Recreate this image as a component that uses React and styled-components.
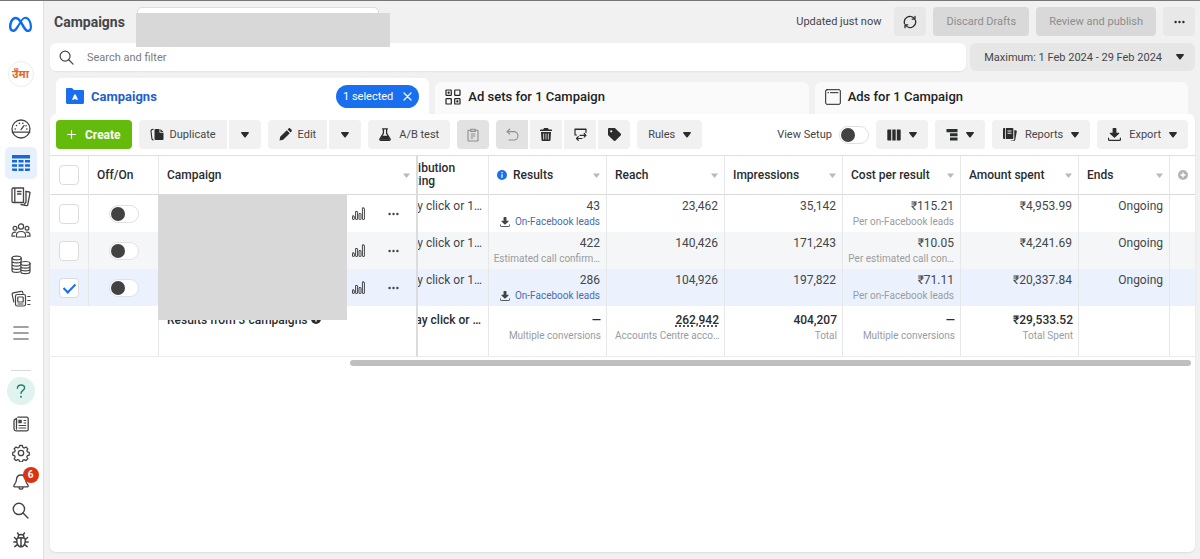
import React, { useState } from "react";
import styled, { createGlobalStyle } from "styled-components";
import { FaMeta } from "react-icons/fa6";

const GlobalStyle = createGlobalStyle`
  * {
    box-sizing: border-box;
  }
  body {
    margin: 0;
    background: #f1f1f1;
    color: #444648;
    font-family: Roboto, "Noto Sans", "Liberation Sans", sans-serif;
    font-size: 12px;
  }
  button, input {
    font: inherit;
    color: inherit;
  }
`;

const Page = styled.div`
  display: flex;
  min-height: 100vh;
  border-top: 1px solid #77757a;
`;

/* sidebar */

const Sidebar = styled.nav`
  display: flex;
  flex-direction: column;
  align-items: center;
  flex: none;
  width: 44px;
  padding: 12px 2px 5px 0;
  background: #fff;
  border-right: 1px solid #dedede;
`;

const Logo = styled.a`
  display: flex;
  margin-bottom: 25px;
`;

const Avatar = styled.a`
  display: flex;
  align-items: center;
  justify-content: center;
  width: 26px;
  height: 26px;
  margin-bottom: 26px;
  border: 1px solid #ececec;
  border-radius: 50%;
  color: #e2672b;
  font: bold 11px/12px "Noto Sans", sans-serif;
  text-decoration: none;
`;

const NavItem = styled.a`
  position: relative;
  display: flex;
  align-items: center;
  justify-content: center;
  width: 32px;
  height: ${(props) => (props.$small ? "29px" : "32px")};
  margin-bottom: ${(props) => (props.$small ? "0" : "2px")};
  border-radius: 5px;
  background: ${(props) => (props.$active ? "#e7f1fe" : "none")};
  color: ${(props) => (props.$active ? "#1769d8" : "#444")};
`;

const NavBottom = styled.div`
  display: flex;
  flex-direction: column;
  align-items: center;
  margin-top: auto;
`;

const Divider = styled.hr`
  width: 20px;
  margin: 0 0 6px;
  border: 0;
  border-top: 1px solid #d9d9d9;
`;

const Help = styled.a`
  display: flex;
  align-items: center;
  justify-content: center;
  width: 28px;
  height: 28px;
  margin-bottom: 4px;
  border-radius: 50%;
  background: #e0f3ee;
  color: #23806c;
`;

const Badge = styled.span`
  position: absolute;
  top: 0;
  right: -2px;
  width: 16px;
  height: 16px;
  border-radius: 50%;
  background: #d9330f;
  color: #fff;
  font-size: 10px;
  font-weight: 700;
  line-height: 16px;
  text-align: center;
`;

/* header */

const Main = styled.main`
  display: flex;
  flex-direction: column;
  flex: 1;
  min-width: 0;
  padding: 6px 5px 7px 6px;
`;

const Header = styled.header`
  display: flex;
  align-items: center;
  gap: 7px;
  height: 29px;
  margin-bottom: 7px;
  font-size: 11px;
`;

const Title = styled.h1`
  margin: 0 5px 0 4px;
  font-size: 14px;
  font-weight: 700;
`;

const Account = styled.div`
  position: relative;
  flex: none;
  width: 242px;
  margin-right: auto;
`;

const AccountInput = styled.input`
  display: block;
  width: 100%;
  height: 29px;
  border: 1px solid #dcdcdc;
  border-radius: 5px;
  background: #fff;
`;

const Cover = styled.div`
  position: absolute;
  z-index: 2;
  background: #d8d8d8;
`;

const AccountCover = styled(Cover)`
  top: 6px;
  left: -1px;
  width: 254px;
  height: 34px;
`;

const Updated = styled.span`
  margin-right: 6px;
`;

const Button = styled.button`
  display: inline-flex;
  align-items: center;
  justify-content: center;
  flex: none;
  gap: 6px;
  min-width: 32px;
  height: 29px;
  padding: ${(props) => (props.$text ? "0 11px" : "0")};
  border: 0;
  border-radius: 4px;
  background: #f1f1f1;
  white-space: nowrap;
  cursor: pointer;
  & > svg {
    color: #2b2c2d;
  }
  &:disabled {
    background: #e2e2e2;
    color: #8d8d8d;
    cursor: default;
  }
  &:disabled > svg {
    color: #8d8d8d;
  }
`;

const HeaderButton = styled(Button)`
  padding: ${(props) => (props.$text ? "0 13px" : "0")};
  background: #e8e8e8;
  &:disabled {
    background: #d9d9d9;
  }
`;

const MenuButton = styled(Button)`
  gap: 8px;
`;

const CreateButton = styled(Button)`
  gap: 9px;
  background: #63bb0b;
  color: #fff;
  font-size: 12px;
  font-weight: 700;
  & > svg {
    color: #fff;
  }
`;

const Filters = styled.div`
  display: flex;
  gap: 4px;
  margin-bottom: 7px;
  font-size: 11px;
`;

const SearchBox = styled.label`
  display: flex;
  align-items: center;
  flex: 1;
  gap: 13px;
  height: 28px;
  padding: 0 9px;
  border-radius: 6px;
  background: #fff;
  box-shadow: 0 1px 2px rgba(0, 0, 0, 0.06);
`;

const SearchInput = styled.input`
  flex: 1;
  min-width: 0;
  padding: 0;
  border: 0;
  outline: 0;
  background: none;
  &::placeholder {
    color: #7b7b7b;
    opacity: 1;
  }
`;

const DateButton = styled(HeaderButton)`
  gap: 14px;
  height: 28px;
  padding: 0 11px 0 14px;
  border-radius: 6px;
  background: #e6e6e6;
`;

/* tabs */

const Tabs = styled.div`
  display: grid;
  grid-template-columns: repeat(3, 1fr);
  align-items: end;
  gap: 6px;
  padding: 0 7px 0 6px;
`;

const Tab = styled.div`
  display: flex;
  align-items: center;
  height: ${(props) => (props.$active ? "36px" : "32px")};
  padding: ${(props) => (props.$active ? "0 10px" : "0 10px 3px")};
  border-radius: 6px 6px 0 0;
  background: ${(props) => (props.$active ? "#fff" : "#fafafa")};
`;

const TabButton = styled.button`
  display: flex;
  align-items: center;
  gap: 7px;
  margin-right: auto;
  padding: 0;
  border: 0;
  background: none;
  color: ${(props) => (props.$active ? "#1f5fc9" : "#222")};
  font-size: 13px;
  font-weight: ${(props) => (props.$active ? "700" : "500")};
  cursor: pointer;
`;

const Chip = styled.button`
  display: flex;
  align-items: center;
  gap: 10px;
  height: 23px;
  padding: 0 7px;
  border: 0;
  border-radius: 12px;
  background: #1a6fee;
  color: #fff;
  font-size: 11px;
`;

/* panel */

const Panel = styled.section`
  flex: 1;
  min-width: 0;
  border-radius: 6px;
  background: #fff;
  box-shadow: 0 1px 2px rgba(0, 0, 0, 0.08);
`;

const Toolbar = styled.div`
  display: flex;
  align-items: center;
  gap: 7px;
  padding: 6px 7px 6px 6px;
  font-size: 11px;
`;

const Group = styled.div`
  display: flex;
  gap: 2px;
  & > button:not(:first-child) {
    border-top-left-radius: 0;
    border-bottom-left-radius: 0;
  }
  & > button:not(:last-child) {
    border-top-right-radius: 0;
    border-bottom-right-radius: 0;
  }
`;

const ViewSetup = styled.label`
  display: flex;
  align-items: center;
  gap: 7px;
  margin-left: auto;
`;

const Switch = styled.input`
  appearance: none;
  display: block;
  width: 30px;
  height: 18px;
  margin: 0 auto;
  padding: 1px;
  border: 1px solid #e1e1e1;
  border-radius: 9px;
  background: #fff;
  &::before {
    content: "";
    display: block;
    width: 14px;
    height: 14px;
    border-radius: 50%;
    background: #424242;
  }
  &:checked::before {
    margin-left: auto;
    background: #1a6fee;
  }
`;

const Checkbox = styled.input`
  appearance: none;
  display: flex;
  justify-content: center;
  width: 20px;
  height: 20px;
  margin: 0;
  border: 1px solid #dcdcdc;
  border-radius: 4px;
  background: #fff;
  &:checked::before {
    content: "";
    width: 5px;
    height: 10px;
    margin-top: 2px;
    border: solid #1a6fee;
    border-width: 0 2px 2px 0;
    transform: rotate(45deg);
  }
`;

const TableWrap = styled.div`
  position: relative;
  border-top: 1px solid #dfdfdf;
`;

const Table = styled.table`
  width: 100%;
  table-layout: fixed;
  border-spacing: 0;
`;

const cellBorder = (props) => {
  if (props.$first) return "1px solid transparent";
  if (props.$frozenEdge) return "2px solid #dcdcdc";
  return "1px solid #e6e7e9";
};

const Th = styled.th`
  height: 39px;
  padding: 0 6px 0 8px;
  border-bottom: 1px solid #dadada;
  border-left: ${cellBorder};
  color: #2b2c2d;
  font-weight: 500;
  line-height: 13px;
  text-align: left;
  overflow: hidden;
`;

const HeadCell = styled.div`
  display: flex;
  align-items: center;
  gap: 6px;
`;

const Row = styled.tr`
  background: ${(props) => props.$bg || "#fff"};
`;

const Td = styled.td`
  height: 37px;
  padding: 4px 6px 3px 7px;
  border-left: ${cellBorder};
  line-height: 15px;
  text-align: right;
  vertical-align: top;
  white-space: nowrap;
  overflow: hidden;
`;

const ControlTd = styled(Td)`
  padding: ${(props) => (props.$first ? "0 0 0 8px" : "0")};
  vertical-align: middle;
`;

const ClippedTd = styled(Td)`
  padding-left: 0;
`;

const TotalTd = styled(Td)`
  height: 51px;
  padding: ${(props) => (props.$frozenEdge ? "7px 7px 0 0" : "7px 5px 0 8px")};
  border-bottom: 1px solid #ececec;
  color: #2b2c2d;
  font-weight: 500;
`;

const TotalLabel = styled.div`
  text-align: left;
`;

const RowActions = styled.div`
  display: flex;
  align-items: center;
  justify-content: flex-end;
  gap: 23px;
  padding-right: 17px;
`;

const IconButton = styled.button`
  display: flex;
  padding: 0;
  border: 0;
  background: none;
  color: #444;
`;

const Scrolled = styled.div`
  margin-left: -28px;
`;

const Clipped = styled.div`
  display: flex;
  justify-content: flex-end;
  overflow: hidden;
`;

const Sub = styled.div`
  display: flex;
  align-items: center;
  justify-content: ${(props) => (props.$start ? "flex-start" : "flex-end")};
  gap: 5px;
  color: #999c9f;
  font-size: 10px;
  font-weight: 400;
  line-height: 15px;
  & > svg {
    color: #444;
  }
`;

const LeadsLink = styled.a`
  color: #4c6bab;
  text-decoration: none;
`;

const Dotted = styled.span`
  text-decoration: underline dotted #555 2px;
  text-underline-offset: 1px;
`;

const CampaignCover = styled(Cover)`
  top: 39px;
  left: 108px;
  width: 189px;
  height: 125px;
`;

const Scrollbar = styled.div`
  height: 6px;
  margin: 3px 4px 0 300px;
  border-radius: 3px;
  background: #bfbfbf;
`;

/* icons */

const Icon = ({ size = 16, w, h, box, fill, sw = 1.3, children }) => (
  <svg
    width={w || size}
    height={h || size}
    viewBox={box || `0 0 ${w || size} ${h || size}`}
    fill={fill ? "currentColor" : "none"}
    stroke={fill ? "none" : "currentColor"}
    strokeWidth={sw}
    strokeLinecap="round"
    strokeLinejoin="round"
    aria-hidden="true"
  >
    {children}
  </svg>
);

const Caret = () => (
  <Icon w={8} h={6} fill>
    <path d="M.8 0h6.4c.7 0 1 .8.5 1.3L4.8 5a1 1 0 0 1-1.6 0L.3 1.3C-.2.8.1 0 .8 0z" />
  </Icon>
);

const SortIcon = styled.svg`
  flex: none;
  margin-left: auto;
  fill: #b9b9b9;
`;

const SortCaret = () => (
  <SortIcon width="7" height="5" viewBox="0 0 7 5" aria-hidden="true">
    <path d="M0 .5h7L3.500 5z" />
  </SortIcon>
);

const Dots = () => (
  <Icon w={11} h={4} fill>
    <circle cx="1.6" cy="2" r="1.2" />
    <circle cx="5.5" cy="2" r="1.2" />
    <circle cx="9.4" cy="2" r="1.2" />
  </Icon>
);

const GaugeIcon = () => (
  <Icon size={20}>
    <circle cx="10" cy="10" r="9" />
    <path d="M1.3 13.2h17.4M10 10.6l3-4" />
    <path d="M4.2 10h.1M5.5 6.5h.1M8.4 4.4h.1M11.8 4.2h.1M15.8 10h.1M15 6.8h.1" strokeWidth="1.6" />
  </Icon>
);

const TableIcon = () => (
  <Icon size={18} fill>
    <path d="M0 1h18v3.4H0zM0 6h5v2.6H0zM6.5 6h5v2.6h-5zM13 6h5v2.6h-5zM0 10.2h5v2.6H0zM6.5 10.2h5v2.6h-5zM13 10.2h5v2.6h-5zM0 14.4h5V17H1.2A1.2 1.2 0 0 1 0 15.800zM6.500 14.400h5V17h-5zM13 14.400h5v1.400A1.200 1.200 0 0 1 16.800 17H13z" />
  </Icon>
);

const PagesIcon = () => (
  <Icon size={20}>
    <path d="M2.200 1h10.300v14.500H2.200A1.200 1.200 0 0 1 1 14.300V2.200A1.200 1.200 0 0 1 2.200 1zM3.800 1v14.500M6.500 4.500h3.500M6.500 7h3.500M15 4.300l3.200.7a1 1 0 0 1 .8 1.200l-2.300 11.600a1 1 0 0 1-1.200.8l-5.500-1.100" />
    <path d="M15 4.500V15l-1.600 2.200" />
  </Icon>
);

const PeopleIcon = () => (
  <Icon size={20} sw={1.2}>
    <circle cx="10" cy="5.500" r="2.600" />
    <circle cx="4" cy="7.300" r="1.900" />
    <circle cx="16" cy="7.300" r="1.900" />
    <path d="M5.400 16v-1.500c0-2.500 2-4 4.600-4s4.600 1.500 4.600 4V16zM4.800 11.200C2.500 10.800 1 12 1 14v1.200h2.500M15.200 11.200c2.300-.4 3.800.8 3.800 2.800v1.200h-2.500" />
  </Icon>
);

const CoinsIcon = () => (
  <Icon size={20} sw={1.2}>
    <ellipse cx="5.600" cy="3" rx="4.600" ry="1.900" />
    <path d="M1 3v12.500c0 1 2 1.900 4.600 1.900 1.300 0 2.500-.2 3.400-.6M10.200 3v3.500M1 6c0 1 2 1.900 4.600 1.900S10.200 7 10.200 6M1 9.200c0 1 2 1.900 4.600 1.900 1.300 0 2.600-.2 3.400-.6M1 12.400c0 1 2 1.900 4.600 1.900 1.300 0 2.600-.2 3.400-.6" />
    <ellipse cx="14.400" cy="8.400" rx="4.600" ry="1.900" />
    <path d="M9.800 8.400v8.300c0 1 2 1.900 4.600 1.900s4.600-.8 4.600-1.900V8.400M9.800 11.300c0 1 2 1.900 4.600 1.900s4.600-.9 4.600-1.900M9.800 14c0 1 2 1.900 4.600 1.900S19 15 19 14" />
  </Icon>
);

const CardsIcon = () => (
  <Icon size={20} sw={1.2}>
    <rect x="4.500" y="5.500" width="10" height="11.500" rx="1.800" />
    <rect x="6.800" y="8" width="5.400" height="5" rx=".6" />
    <path d="M7 15h5M2.800 12.800L1.200 5.600a1.500 1.500 0 0 1 1.200-1.800L10 2.300a1.500 1.500 0 0 1 1.700 1l.3 1M16.800 7.500H19M16.800 11.500H19M16.800 15.500H19" />
  </Icon>
);

const MenuIcon = () => (
  <Icon size={16} sw={1.2}>
    <path d="M.800 2h14.400M.800 8h14.400M.800 14h14.400" />
  </Icon>
);

const HelpIcon = () => (
  <Icon w={10} h={14} sw={1.400}>
    <path d="M1.400 4.200C1.400 2.200 2.900 1 5 1s3.600 1.200 3.600 3C8.600 6.400 5 6.400 5 9.400" />
    <path d="M5 12.600v.100" strokeWidth="1.900" />
  </Icon>
);

const NewsIcon = () => (
  <Icon size={16} sw={1.300}>
    <path d="M4.800 1.200h9a1.400 1.400 0 0 1 1.400 1.400v10.800a1.400 1.400 0 0 1-1.400 1.400H3A2 2 0 0 1 1 13V5a2 2 0 0 1 1.600-2M3.500 2.500v10.500" />
    <rect x="5.600" y="4" width="3" height="3" fill="currentColor" strokeWidth=".5" />
    <path d="M11 4.500h1.800M11 7h1.800M6 9.500h6.800M6 12h6.800" strokeWidth="1" />
  </Icon>
);

const GearIcon = () => (
  <Icon size={18} box="0 0 24 24" sw={1.700}>
    <circle cx="12" cy="12" r="3.600" />
    <path d="M10.200 2h3.600l.7 2.600 1.800.8 2.400-1.400 2.400 2.500-1.300 2.300.8 1.800 2.400.6v3.600l-2.500.7-.8 1.800 1.400 2.400-2.500 2.400-2.300-1.300-1.800.8-.7 2.400h-3.600l-.7-2.500-1.800-.8-2.400 1.400-2.400-2.500 1.300-2.300-.8-1.800-2.400-.7v-3.600l2.500-.6.8-1.800-1.400-2.400 2.500-2.400 2.300 1.300 1.800-.8z" />
  </Icon>
);

const BellIcon = () => (
  <Icon size={18} sw={1.300}>
    <path d="M9 2c-3 0-4.300 2-4.500 4.500-.2 3.500-2 4.500-2.700 6.200-.2.600.1 1.100.8 1.100h12.800c.700 0 1-.500.800-1.100-.700-1.700-2.500-2.700-2.700-6.200C13.300 4 12 2 9 2zM7 14c0 1.200.800 2.200 2 2.200s2-1 2-2.200" />
  </Icon>
);

const SearchIcon = ({ size = 16 }) => (
  <Icon size={size} box="0 0 16 16" sw={1.300}>
    <circle cx="6.500" cy="6.500" r="5.300" />
    <path d="M10.400 10.400l4.600 4.600" />
  </Icon>
);

const BugIcon = () => (
  <Icon size={16} sw={1.500}>
    <path d="M4 6.500c1.500-1 6.500-1 8 0 .8 4-.5 8.300-4 8.300S3.200 10.500 4 6.500zM5 5.800C5 3.600 6.200 2.600 8 2.600s3 1 3 3.200M8 6v8.800M5.600 2.600L4.600 1M10.400 2.600l1-1.600M3.800 7.600L1.500 5.500M3.600 10H.8M4.300 12.600l-2.500 2M12.200 7.600l2.300-2.100M12.400 10h2.800M11.700 12.600l2.500 2" />
  </Icon>
);

const RefreshIcon = () => (
  <Icon size={14} sw={1.300}>
    <path d="M1.500 8.500A5.600 5.600 0 0 1 4 2.300a5.600 5.600 0 0 1 7.500 1.500M12.500 5.500A5.600 5.600 0 0 1 10 11.700a5.600 5.600 0 0 1-7.500-1.500" />
    <path d="M12 1.300v2.900H9.200M2 12.700V9.800h2.800" />
  </Icon>
);

const FolderIcon = () => (
  <svg width="18" height="16" viewBox="0 0 18 16" aria-hidden="true">
    <path fill="#1a6fee" d="M1.200 0H6l2 2h8.800C17.500 2 18 2.500 18 3.200v11.600c0 .7-.5 1.200-1.200 1.200H1.200C.5 16 0 15.500 0 14.800V1.200C0 .5.5 0 1.200 0z" />
    <path fill="#fff" d="M8.300 6.500h1.400l2.300 5.300H10L9.600 10.900H8.400L8 11.800H6z" />
  </svg>
);

const AdSetsIcon = () => (
  <Icon size={16} sw={1.200}>
    <rect x="1" y="1" width="5.300" height="5.300" rx=".6" />
    <rect x="9.700" y="1" width="5.300" height="5.300" rx=".6" />
    <rect x="1" y="9.700" width="5.300" height="5.300" rx=".6" />
    <rect x="9.700" y="9.700" width="5.300" height="5.300" rx=".6" />
    <path d="M3.200 3.200h.900v.900h-.900zM11.900 11.900h.900v.900h-.900z" />
  </Icon>
);

const AdsIcon = () => (
  <Icon size={16} sw={1}>
    <rect x=".700" y=".700" width="14.600" height="14.600" rx="1.200" />
    <path d="M3 3.700h.600M5.500 3.700h7.500" />
  </Icon>
);

const DuplicateIcon = () => (
  <Icon w={14} h={13} fill>
    <path d="M5.500 1h4v3.800h4V11a1 1 0 0 1-1 1h-7a1 1 0 0 1-1-1V2a1 1 0 0 1 1-1zM10.400 1l3.100 3h-3.100z" />
    <path d="M3.200 1.300C1.600 1.500.900 2 1 3.200l.9 7.400c.1.800.5 1.200 1.200 1.300" fill="none" stroke="currentColor" strokeWidth="1.100" />
  </Icon>
);

const PencilIcon = () => (
  <Icon size={13} fill>
    <path d="M.500 12.500l.7-3.700L7.800 2.200l3 3L4.200 11.800zM8.600 1.400l.9-.9a1.300 1.300 0 0 1 1.800 0l1.200 1.200c.5.500.5 1.300 0 1.800l-.9.900z" />
  </Icon>
);

const FlaskIcon = () => (
  <Icon w={12} h={13}>
    <path d="M3.500.800h5M4.400 1v4.300L1 10.800c-.4.800 0 1.500.9 1.500h8.200c.9 0 1.300-.7.900-1.500L7.600 5.300V1" />
    <path d="M3.200 8h5.600l1.700 3.200c.1.300 0 .600-.4.600H1.900c-.4 0-.5-.3-.4-.6z" fill="currentColor" strokeWidth=".5" />
  </Icon>
);

const ClipboardIcon = () => (
  <Icon w={12} h={14} sw={1.100}>
    <path d="M3.500 2.200H1.800a.8.800 0 0 0-.8.800v9.200c0 .4.400.8.800.8h8.400c.4 0 .8-.4.800-.8V3a.8.800 0 0 0-.8-.8H8.500M3.800 1.200h4.400v2.200H3.800zM4.200 6h3.600M4.200 8h3.600M4.200 10h1.500" />
  </Icon>
);

const UndoIcon = () => (
  <Icon w={13} h={13} sw={1.100}>
    <path d="M3.800 1L1 3.600l2.800 2.600M1.200 3.600h6.600a4.200 4.200 0 0 1 0 8.400H3" />
  </Icon>
);

const TrashIcon = () => (
  <Icon w={12} h={13} fill>
    <path d="M4 0h4l.700 1.500h2.600c.4 0 .7.300.7.700v.900H0v-.9c0-.4.300-.7.700-.7h2.600z" />
    <path fillRule="evenodd" d="M1 4h10l-.5 8a1 1 0 0 1-1 1h-7a1 1 0 0 1-1-1zM3.300 5.500v6h.8v-6zM5.600 5.500v6h.8v-6zM7.900 5.500v6h.8v-6z" />
  </Icon>
);

const SwapIcon = () => (
  <Icon size={13} sw={1.200}>
    <path d="M2.500 7H1V1h11v3.500M1 1.400h11" />
    <path d="M6 7.300h6M10.200 5.500L12 7.300l-1.800 1.800M8 10.500H2.500M4.300 8.700l-1.800 1.800 1.800 1.800" />
  </Icon>
);

const TagIcon = () => (
  <Icon size={13} fill>
    <path fillRule="evenodd" d="M1.200 0h5.200c.4 0 .7.100 1 .4l5.200 5.200c.6.600.6 1.400 0 2l-5 5c-.6.600-1.400.6-2 0L.4 7.400C.1 7.100 0 6.800 0 6.400V1.200C0 .5.500 0 1.200 0zM3.200 2.200a1.100 1.100 0 1 0 0 2.200 1.100 1.100 0 0 0 0-2.200z" />
  </Icon>
);

const ColumnsIcon = () => (
  <Icon w={14} h={12} fill>
    <path d="M1 .5h3.200v11H1a.7.700 0 0 1-.7-.7V1.200A.7.700 0 0 1 1 .5zM5.300.5h3.400v11H5.300zM9.800.5H13a.7.700 0 0 1 .7.700v9.600a.7.700 0 0 1-.7.700H9.800z" />
  </Icon>
);

const BreakdownIcon = () => (
  <Icon w={12} h={12} fill>
    <path d="M.5 0h11v3.200H.5zM4 4.300h7.500v3H4zM4 8.500h7.500v3H4z" />
  </Icon>
);

const ReportsIcon = () => (
  <Icon w={14} h={13} fill>
    <path fillRule="evenodd" d="M1 0h1.200v11H1a1 1 0 0 1-1-1V1a1 1 0 0 1 1-1zM3 0h6.500a.8.800 0 0 1 .8.800v9.400a.8.800 0 0 1-.8.800H3zM4.500 2.500v1h4v-1zM4.500 4.800v1h4v-1z" />
    <path d="M11.300 2l1.800.4c.5.100.8.500.7 1l-1.600 8.700c-.1.500-.5.800-1 .7L6.500 12h3.800a1 1 0 0 0 1-1z" />
  </Icon>
);

const DownloadIcon = ({ size = 13 }) => (
  <Icon size={size} box="0 0 13 13" fill>
    <path d="M4.600.800c0-.4.300-.8.800-.8h2.200c.5 0 .8.400.8.800v4h2.300c.5 0 .7.500.4.900L7 9.600a.8.800 0 0 1-1 0L1.900 5.700c-.3-.4-.1-.9.400-.9h2.300z" />
    <path d="M.6 10.200v1.300c0 .5.400.9.900.9h10c.5 0 .9-.4.900-.9v-1.300" fill="none" stroke="currentColor" strokeWidth="1.200" />
  </Icon>
);

const PlusIcon = () => (
  <Icon size={9} sw={1.200}>
    <path d="M4.500.500v8M.500 4.500h8" />
  </Icon>
);

const CloseIcon = () => (
  <Icon size={9} sw={1.200}>
    <path d="M1 1l7 7M8 1L1 8" />
  </Icon>
);

const ChartIcon = () => (
  <Icon w={13} h={13} sw={1}>
    <rect x=".500" y="9" width="1.800" height="3.500" rx=".5" />
    <rect x="3.600" y="4.500" width="2" height="8" rx=".5" />
    <rect x="7" y="6.500" width="2" height="6" rx=".5" />
    <rect x="10.400" y="1" width="2" height="11.500" rx=".5" />
  </Icon>
);

const InfoIcon = ({ color = "#1a6fee" }) => (
  <svg width="10" height="10" viewBox="0 0 10 10" aria-hidden="true">
    <circle cx="5" cy="5" r="5" fill={color} />
    <path d="M5 4.300v3.500M5 2v1.300" stroke="#fff" strokeWidth="1.300" fill="none" />
  </svg>
);

const AddColumnIcon = () => (
  <svg width="10" height="10" viewBox="0 0 10 10" aria-hidden="true">
    <circle cx="5" cy="5" r="5" fill="#b4b4b4" />
    <path d="M5 2.500v5M2.500 5h5" stroke="#fff" strokeWidth="1.400" />
  </svg>
);

/* data */

const navItems = [
  { label: "Account overview", icon: <GaugeIcon /> },
  { label: "Campaigns", icon: <TableIcon />, active: true },
  { label: "Ads reporting", icon: <PagesIcon /> },
  { label: "Audiences", icon: <PeopleIcon /> },
  { label: "Billing", icon: <CoinsIcon /> },
  { label: "Creative", icon: <CardsIcon /> },
  { label: "All tools", icon: <MenuIcon /> },
];

const bottomItems = [
  { label: "News", icon: <NewsIcon /> },
  { label: "Settings", icon: <GearIcon /> },
  { label: "Notifications", icon: <BellIcon />, badge: 6 },
  { label: "Search", icon: <SearchIcon size={17} /> },
  { label: "Report a problem", icon: <BugIcon /> },
];

const campaigns = [
  { id: 1, results: "43", leads: true, reach: "23,462", impressions: "35,142", cost: "₹115.21", costNote: "Per on-Facebook leads", spent: "₹4,953.99" },
  { id: 2, results: "422", leads: false, reach: "140,426", impressions: "171,243", cost: "₹10.05", costNote: "Per estimated call con…", spent: "₹4,241.69" },
  { id: 3, results: "286", leads: true, reach: "104,926", impressions: "197,822", cost: "₹71.11", costNote: "Per on-Facebook leads", spent: "₹20,337.84" },
];

const columnWidths = ["38px", "70px", null, "72px", "118px", "118px", "118px", "118px", "118px", "91px", "26px"];

const CampaignTable = () => {
  const [selected, setSelected] = useState([3]);

  const toggle = (id) => {
    setSelected(selected.includes(id) ? selected.filter((s) => s !== id) : [...selected, id]);
  };

  const rowColor = (id) => {
    if (selected.includes(id)) return "#ebf2fe";
    return id % 2 === 0 ? "#f5f6f7" : "#fff";
  };

  return (
    <TableWrap>
      <Table>
        <colgroup>
          {columnWidths.map((width, i) => (
            <col key={i} width={width || undefined} />
          ))}
        </colgroup>
        <thead>
          <tr>
            <Th $first>
              <Checkbox type="checkbox" aria-label="Select all" />
            </Th>
            <Th>Off/On</Th>
            <Th><HeadCell>Campaign<SortCaret /></HeadCell></Th>
            <Th $frozenEdge><Scrolled>Attribution<br />setting</Scrolled></Th>
            <Th><HeadCell><InfoIcon />Results<SortCaret /></HeadCell></Th>
            <Th><HeadCell>Reach<SortCaret /></HeadCell></Th>
            <Th><HeadCell>Impressions<SortCaret /></HeadCell></Th>
            <Th><HeadCell>Cost per result<SortCaret /></HeadCell></Th>
            <Th><HeadCell>Amount spent<SortCaret /></HeadCell></Th>
            <Th><HeadCell>Ends<SortCaret /></HeadCell></Th>
            <Th><HeadCell><AddColumnIcon /></HeadCell></Th>
          </tr>
        </thead>
        <tbody>
          {campaigns.map((c) => (
            <Row key={c.id} $bg={rowColor(c.id)}>
              <ControlTd $first>
                <Checkbox
                  type="checkbox"
                  aria-label={`Select campaign ${c.id}`}
                  checked={selected.includes(c.id)}
                  onChange={() => toggle(c.id)}
                />
              </ControlTd>
              <ControlTd><Switch type="checkbox" role="switch" aria-label={`Campaign ${c.id} on`} /></ControlTd>
              <ControlTd>
                <RowActions>
                  <IconButton aria-label="View charts"><ChartIcon /></IconButton>
                  <IconButton aria-label="More options"><Dots /></IconButton>
                </RowActions>
              </ControlTd>
              <ClippedTd $frozenEdge><Clipped>7-day click or 1…</Clipped></ClippedTd>
              <Td>
                {c.results}
                {c.leads ? (
                  <Sub><DownloadIcon size={10} /><LeadsLink href="#leads">On-Facebook leads</LeadsLink></Sub>
                ) : (
                  <Sub>Estimated call confirm…</Sub>
                )}
              </Td>
              <Td>{c.reach}</Td>
              <Td>{c.impressions}</Td>
              <Td>{c.cost}<Sub>{c.costNote}</Sub></Td>
              <Td>{c.spent}</Td>
              <Td>Ongoing</Td>
              <Td />
            </Row>
          ))}
        </tbody>
        <tfoot>
          <Row>
            <TotalTd $first />
            <TotalTd $first />
            <TotalTd><TotalLabel>Results from 3 campaigns <InfoIcon color="#2b2c2d" /></TotalLabel></TotalTd>
            <TotalTd $frozenEdge><Clipped>7-day click or …</Clipped></TotalTd>
            <TotalTd>—<Sub>Multiple conversions</Sub></TotalTd>
            <TotalTd><Dotted>262,942</Dotted><Sub $start>Accounts Centre acco…</Sub></TotalTd>
            <TotalTd>404,207<Sub>Total</Sub></TotalTd>
            <TotalTd>—<Sub>Multiple conversions</Sub></TotalTd>
            <TotalTd>₹29,533.52<Sub>Total Spent</Sub></TotalTd>
            <TotalTd />
            <TotalTd />
          </Row>
        </tfoot>
      </Table>
      <CampaignCover />
      <Scrollbar />
    </TableWrap>
  );
};

const App = () => {
  return (
    <>
      <GlobalStyle />
      <Page>
        <Sidebar>
          <Logo href="#home" aria-label="Meta"><FaMeta size={23} color="#0a6cf0" /></Logo>
          <Avatar href="#account">उँमा</Avatar>
          {navItems.map((item) => (
            <NavItem key={item.label} href="#nav" aria-label={item.label} $active={item.active}>
              {item.icon}
            </NavItem>
          ))}
          <NavBottom>
            <Divider />
            <Help href="#help" aria-label="Help"><HelpIcon /></Help>
            {bottomItems.map((item) => (
              <NavItem key={item.label} href="#nav" aria-label={item.label} $small>
                {item.icon}
                {item.badge && <Badge>{item.badge}</Badge>}
              </NavItem>
            ))}
          </NavBottom>
        </Sidebar>
        <Main>
          <Header>
            <Title>Campaigns</Title>
            <Account>
              <AccountInput type="text" aria-label="Ad account" />
              <AccountCover />
            </Account>
            <Updated>Updated just now</Updated>
            <HeaderButton aria-label="Refresh"><RefreshIcon /></HeaderButton>
            <HeaderButton $text disabled>Discard Drafts</HeaderButton>
            <HeaderButton $text disabled>Review and publish</HeaderButton>
            <HeaderButton aria-label="More"><Dots /></HeaderButton>
          </Header>
          <Filters>
            <SearchBox>
              <SearchIcon size={15} />
              <SearchInput type="text" placeholder="Search and filter" aria-label="Search and filter" />
            </SearchBox>
            <DateButton>Maximum: 1 Feb 2024 - 29 Feb 2024<Caret /></DateButton>
          </Filters>
          <Tabs>
            <Tab $active>
              <TabButton $active><FolderIcon />Campaigns</TabButton>
              <Chip>1 selected<CloseIcon /></Chip>
            </Tab>
            <Tab>
              <TabButton><AdSetsIcon />Ad sets for 1 Campaign</TabButton>
            </Tab>
            <Tab>
              <TabButton><AdsIcon />Ads for 1 Campaign</TabButton>
            </Tab>
          </Tabs>
          <Panel>
            <Toolbar>
              <CreateButton $text><PlusIcon />Create</CreateButton>
              <Group>
                <Button $text><DuplicateIcon />Duplicate</Button>
                <Button aria-label="Duplicate options"><Caret /></Button>
              </Group>
              <Group>
                <Button $text><PencilIcon />Edit</Button>
                <Button aria-label="Edit options"><Caret /></Button>
              </Group>
              <MenuButton $text><FlaskIcon />A/B test</MenuButton>
              <Button disabled aria-label="Paste"><ClipboardIcon /></Button>
              <Group>
                <Button disabled aria-label="Undo"><UndoIcon /></Button>
                <Button aria-label="Delete"><TrashIcon /></Button>
                <Button aria-label="Move"><SwapIcon /></Button>
                <Button aria-label="Tag"><TagIcon /></Button>
              </Group>
              <MenuButton $text>Rules<Caret /></MenuButton>
              <ViewSetup>
                View Setup
                <Switch type="checkbox" role="switch" />
              </ViewSetup>
              <MenuButton $text aria-label="Columns"><ColumnsIcon /><Caret /></MenuButton>
              <MenuButton $text aria-label="Breakdown"><BreakdownIcon /><Caret /></MenuButton>
              <MenuButton $text><ReportsIcon />Reports<Caret /></MenuButton>
              <MenuButton $text><DownloadIcon />Export<Caret /></MenuButton>
            </Toolbar>
            <CampaignTable />
          </Panel>
        </Main>
      </Page>
    </>
  );
};

export default App;
